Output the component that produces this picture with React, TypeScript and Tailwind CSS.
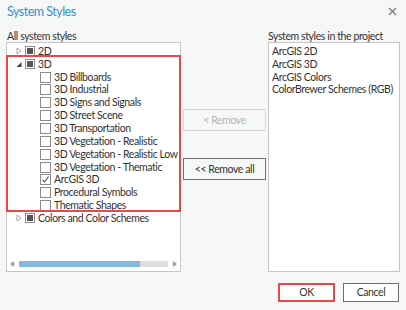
import React from 'react';

const children = [
  '3D Billboards',
  '3D Industrial',
  '3D Signs and Signals',
  '3D Street Scene',
  '3D Transportation',
  '3D Vegetation - Realistic',
  '3D Vegetation - Realistic Low',
  '3D Vegetation - Thematic',
  'ArcGIS 3D',
  'Procedural Symbols',
  'Thematic Shapes',
];

const projectStyles = ['ArcGIS 2D', 'ArcGIS 3D', 'ArcGIS Colors', 'ColorBrewer Schemes (RGB)'];

function Collapsed() {
  return (
    <svg width="6" height="8" viewBox="0 0 6 8" className="shrink-0">
      <path d="M1 1 L5 4 L1 7 Z" fill="none" stroke="#a6a6a6" strokeWidth="1" />
    </svg>
  );
}

function Expanded() {
  return (
    <svg width="6" height="8" viewBox="0 0 6 8" className="shrink-0">
      <path d="M5.5 2 L5.5 7 L0.5 7 Z" fill="#444" />
    </svg>
  );
}

function PartialBox() {
  return (
    <div className="w-[10px] h-[10px] border border-[#8c8c8c] bg-white flex items-center justify-center shrink-0">
      <div className="w-[6px] h-[6px] bg-[#555]" />
    </div>
  );
}

function CheckBox({ checked }: { checked?: boolean }) {
  return (
    <div className="w-[11px] h-[11px] border border-[#8c8c8c] bg-white flex items-center justify-center shrink-0">
      {checked && (
        <svg width="9" height="9" viewBox="0 0 9 9">
          <path d="M1.5 4.8 L3.5 7 L7.5 1.5" fill="none" stroke="#444" strokeWidth="1.1" />
        </svg>
      )}
    </div>
  );
}

function ParentRow({ label, open }: { label: string; open?: boolean }) {
  return (
    <div className="h-[12.85px] flex items-center">
      <div className="w-[14px] pl-[9px] flex items-center">{open ? <Expanded /> : <Collapsed />}</div>
      <div className="ml-[4px]">
        <PartialBox />
      </div>
      <span className="ml-[3px] whitespace-nowrap">{label}</span>
    </div>
  );
}

export default function App() {
  return (
    <div
      className="w-[406px] h-[310px] bg-[#f6f7f7] text-[#333] text-[10.5px] tracking-[-0.4px] leading-[13px] overflow-hidden flex flex-col"
      style={{ fontFamily: 'Lato, "Noto Sans", sans-serif' }}
    >
      <div className="flex items-center justify-between pl-[7px] pr-[9px] h-[21px] pt-[1px]">
        <span className="text-[12.5px] tracking-[-0.5px] text-[#3b8ed2]">System Styles</span>
        <svg width="9" height="9" viewBox="0 0 9 9">
          <path d="M1 1 L8 8 M8 1 L1 8" stroke="#777" strokeWidth="1.2" />
        </svg>
      </div>

      <div className="flex pl-[6px] mt-[9px]">
        <div className="w-[175px]">
          <div className="h-[12px] pl-[1px] whitespace-nowrap">All system styles</div>
          <div className="relative h-[230px] border border-[#c6c6c6] bg-white flex flex-col">
            <div className="flex-1 pt-[2px]">
              <ParentRow label="2D" />
              <ParentRow label="3D" open />
              {children.map((c) => (
                <div key={c} className="h-[12.85px] flex items-center pl-[33px]">
                  <CheckBox checked={c === 'ArcGIS 3D'} />
                  <span className="ml-[3px] whitespace-nowrap">{c}</span>
                </div>
              ))}
              <ParentRow label="Colors and Color Schemes" />
            </div>
            <div className="h-[8px] mb-[3px] flex items-center px-[2px]">
              <svg width="5" height="6" viewBox="0 0 5 6" className="ml-[1px]">
                <path d="M4 0 L0 3 L4 6 Z" fill="#9a9a9a" />
              </svg>
              <div className="flex-1 h-[6px] bg-[#dedede] mx-[4px] flex">
                <div className="w-[121px] h-full bg-[#82b9e0]" />
              </div>
              <svg width="5" height="6" viewBox="0 0 5 6" className="mr-[1px]">
                <path d="M1 0 L5 3 L1 6 Z" fill="#9a9a9a" />
              </svg>
            </div>
            <div className="absolute left-[-1px] top-[12px] w-[175px] h-[157px] border-2 border-[#e8474b]" />
          </div>
        </div>

        <div className="w-[83px] ml-[2px] pt-[79px] flex flex-col">
          <div className="h-[22px] border border-[#d4d4d4] bg-[#f6f7f7] text-[#b5b5b5] flex items-center justify-center">
            &lt; Remove
          </div>
          <div className="h-[22px] mt-[27px] border border-[#707070] bg-[#f6f7f7] flex items-center justify-center">
            &lt;&lt; Remove all
          </div>
        </div>

        <div className="w-[132px] ml-[2px]">
          <div className="h-[12px] whitespace-nowrap">System styles in the project</div>
          <div className="h-[230px] border border-[#c6c6c6] bg-white pl-[3px] pt-[2px]">
            {projectStyles.map((s) => (
              <div key={s} className="h-[12.85px] flex items-center whitespace-nowrap">
                {s}
              </div>
            ))}
          </div>
        </div>
      </div>

      <div className="flex justify-end pr-[7px] mt-[11px] gap-[8px]">
        <div className="w-[57px] h-[19px] border-2 border-[#e8474b] bg-white flex items-center justify-center">OK</div>
        <div className="w-[56px] h-[19px] border border-[#707070] bg-white flex items-center justify-center">Cancel</div>
      </div>
    </div>
  );
}
